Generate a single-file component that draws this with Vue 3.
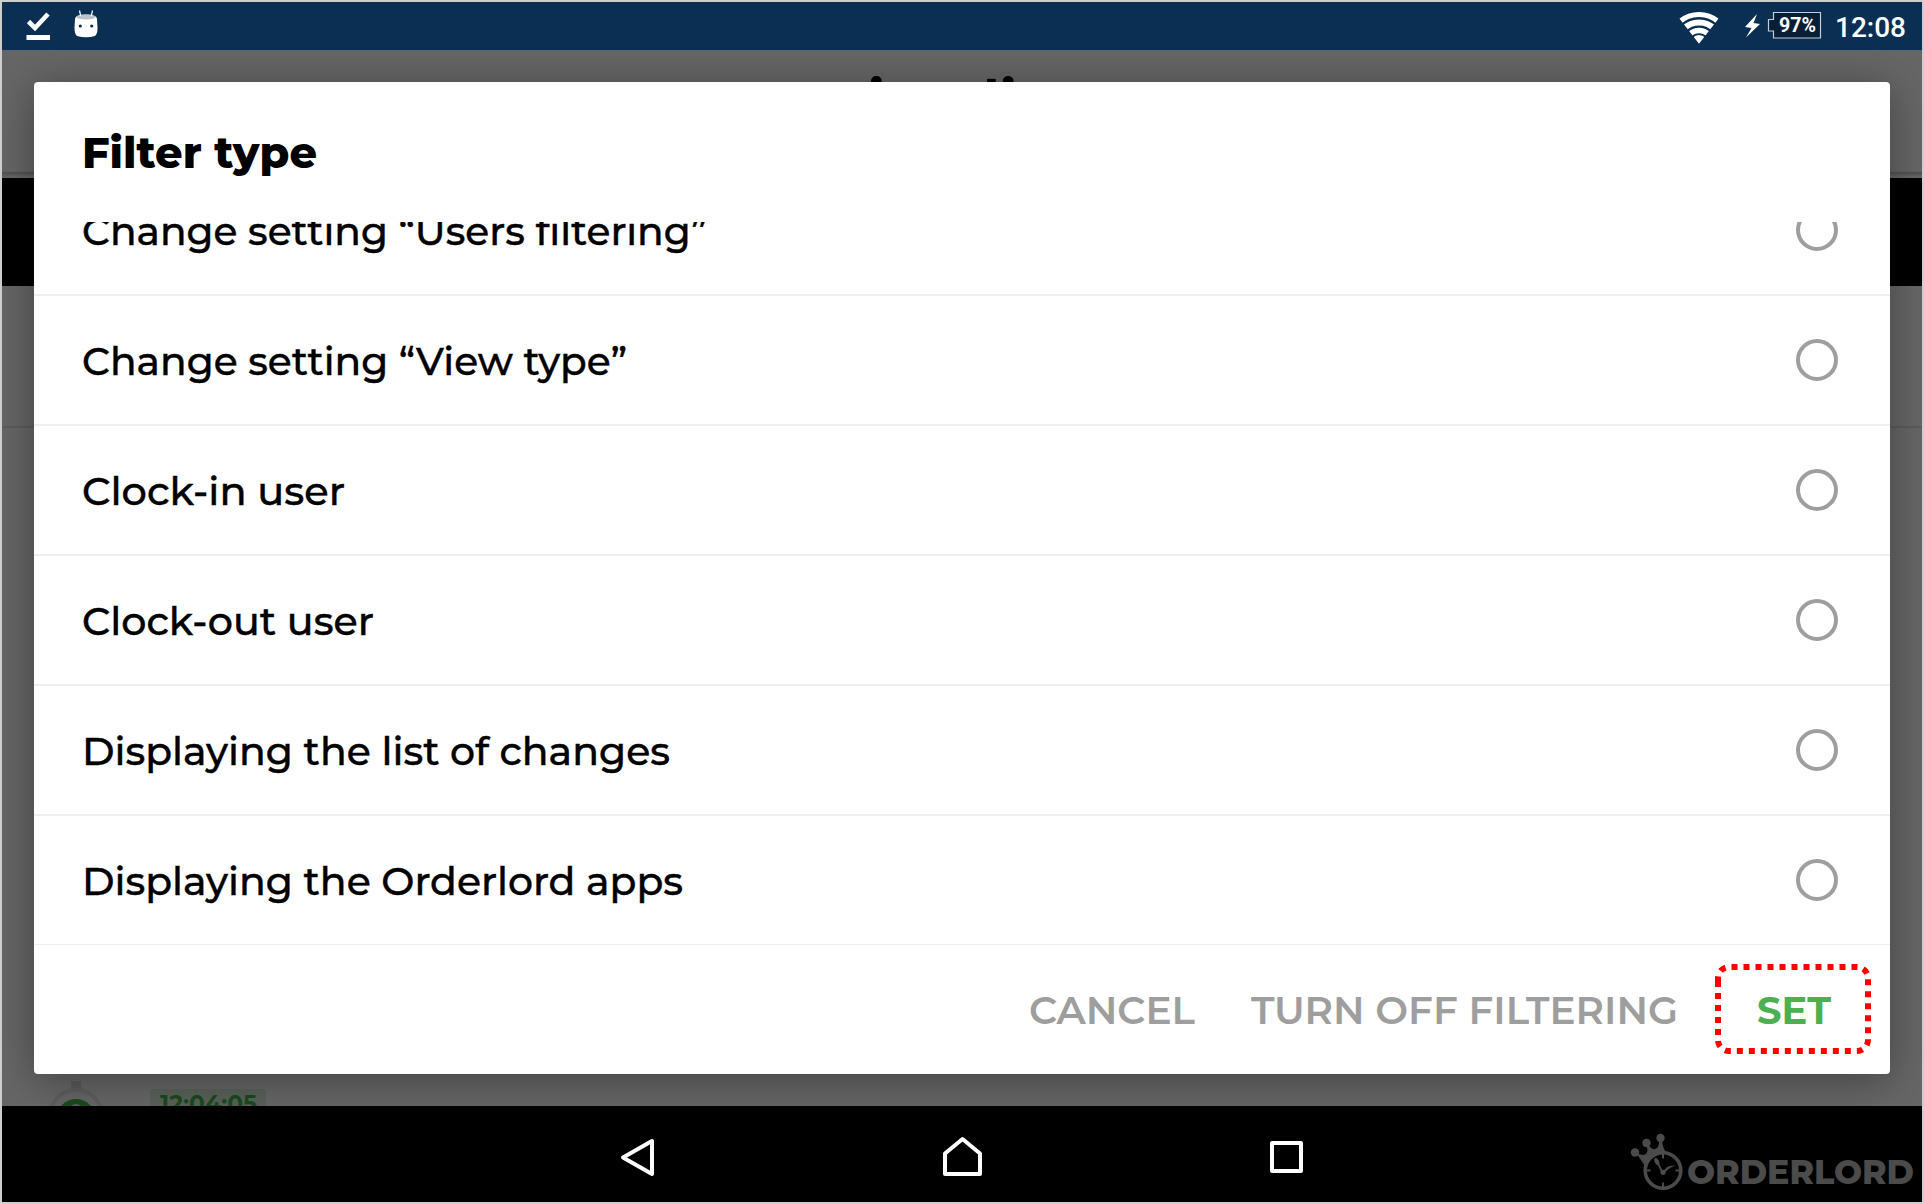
<script setup>
const rows = [
  { text: 'Change setting “Users filtering”', width: 625 },
  { text: 'Change setting “View type”', width: 545 },
  { text: 'Clock-in user', width: 263 },
  { text: 'Clock-out user', width: 292 },
  { text: 'Displaying the list of changes', width: 588 },
  { text: 'Displaying the Orderlord apps', width: 601 },
]
</script>

<template>
  <div class="device">
    <header class="status">
      <svg class="status-left" width="100" height="48" viewBox="2 2 100 48">
        <path d="M28.500 21.500 L35 28 L48 14" fill="none" stroke="#fff" stroke-width="4.600" />
        <rect x="26.500" y="35" width="23.500" height="5" fill="#fff" />
        <path d="M75 19 Q75 14.500 86 14.500 Q97 14.500 97 19 L97.500 28 Q97.500 34 95 36 Q86 38.500 77 36 Q74.500 34 74.500 28 Z" fill="#fff" />
        <ellipse cx="86" cy="17" rx="9.500" ry="2.600" fill="#b9c4cf" />
        <path d="M79.500 10.500 L80.700 16 M92.500 10.500 L91.300 16" stroke="#fff" stroke-width="1.200" />
        <circle cx="80.300" cy="26" r="1.600" fill="#0a2f53" />
        <circle cx="91.700" cy="26" r="1.600" fill="#0a2f53" />
      </svg>
      <svg class="status-right" width="252" height="48" viewBox="1670 2 252 48">
        <clipPath id="fan"><path d="M1699 43.800 L1679 18 L1679 10 L1719 10 L1719 18 Z" /></clipPath>
        <g clip-path="url(#fan)" fill="none" stroke="#fff">
          <circle cx="1699" cy="44" r="29.500" stroke-width="5" />
          <circle cx="1699" cy="44" r="21.500" stroke-width="6" />
          <circle cx="1699" cy="44" r="13.500" stroke-width="5.600" />
          <circle cx="1699" cy="44" r="4.500" stroke-width="9" />
        </g>
        <path d="M1757 14 L1745 27 L1751.500 28 L1746 37.500 L1760 24 L1753.500 23 Z" fill="#fff" />
        <path d="M1773.500 12.500 H1820.500 V38 H1773.500 V31 H1768.500 V19.500 H1773.500 Z" fill="#061e36" stroke="#c3ccd4" stroke-width="1.200" />
        <text x="1779" y="32.300" class="roboto" font-size="21" font-weight="700" textLength="37" lengthAdjust="spacingAndGlyphs">97%</text>
        <text x="1835" y="36.800" class="roboto" font-size="28" font-weight="500" textLength="71" lengthAdjust="spacingAndGlyphs">12:08</text>
      </svg>
    </header>

    <main class="page">
      <div class="page-header">
        <svg width="400" height="100" viewBox="762 50 400 100">
          <text class="heading" y="121"><tspan x="868">ion </tspan><tspan x="983">list</tspan></text>
        </svg>
      </div>
      <div class="page-tabs"></div>
      <div class="page-summary"></div>
      <div class="page-entry">
        <svg width="60" height="28" viewBox="48 1078 60 28">
          <rect x="71" y="1081" width="10" height="9" fill="#595959" />
          <circle cx="76" cy="1116" r="26" fill="none" stroke="#5e5e5e" stroke-width="4" />
          <circle cx="76" cy="1118.500" r="19.500" fill="#1b4a1e" />
          <circle cx="76" cy="1110" r="6" fill="#5d665e" />
        </svg>
        <div class="chip">
          <svg width="98" height="22">
            <text x="0" y="22.500" class="stamp" textLength="97" lengthAdjust="spacingAndGlyphs">12:04:05</text>
          </svg>
        </div>
      </div>

      <section class="dialog">
        <h1>
          <svg width="240" height="60">
            <text x="0" y="45.500" class="title" textLength="235" lengthAdjust="spacingAndGlyphs">Filter type</text>
          </svg>
        </h1>
        <div class="list">
          <div v-for="row in rows" :key="row.text" class="row">
            <svg :width="row.width + 10" height="60">
              <text x="0" y="44.500" class="label" :textLength="row.width" lengthAdjust="spacingAndGlyphs">{{ row.text }}</text>
            </svg>
            <span class="radio"></span>
          </div>
        </div>
        <footer class="actions">
          <svg width="167" height="60">
            <text x="0" y="45" class="action" textLength="166" lengthAdjust="spacingAndGlyphs">CANCEL</text>
          </svg>
          <svg width="427" height="60">
            <text x="0" y="45" class="action" textLength="427" lengthAdjust="spacingAndGlyphs">TURN OFF FILTERING</text>
          </svg>
          <svg class="set" width="156" height="90">
            <path d="M3 17 V76 A11 11 0 0 0 14 87 H142 A11 11 0 0 0 153 76 V14 A11 11 0 0 0 142 3 H14 A11 11 0 0 0 3 14 V17" fill="none" stroke="#f00" stroke-width="6" stroke-dasharray="6 6" />
            <text x="42" y="60" class="action confirm" textLength="74" lengthAdjust="spacingAndGlyphs">SET</text>
          </svg>
        </footer>
      </section>
    </main>

    <nav class="navbar">
      <svg class="nav-icons" width="700" height="96" viewBox="600 1106 700 96" fill="none" stroke="#fff" stroke-width="4" stroke-linejoin="round">
        <path d="M652 1141 V1174 L623 1157.500 Z" />
        <path d="M945 1153.500 L962.500 1139 L980 1153.500 V1174 H945 Z" />
        <rect x="1272" y="1143" width="29" height="28" />
      </svg>
      <svg class="brand" width="300" height="96" viewBox="1622 1106 300 96">
        <g fill="#4b4b4b">
          <circle cx="1635" cy="1152.500" r="4.200" />
          <circle cx="1646.500" cy="1143" r="4.200" />
          <circle cx="1660.500" cy="1138" r="4.200" />
          <path d="M1635.500 1152 Q1641 1156.500 1646 1154 Q1649 1151 1646 1144 L1648 1144 Q1651 1150 1655 1149 Q1660 1148 1659 1139 L1662 1139 Q1662 1147 1667 1154 L1645 1166 Z" />
          <circle cx="1663" cy="1170.500" r="17.800" fill="#000" stroke="#4b4b4b" stroke-width="3.600" />
          <path d="M1663 1154 V1158.500 M1663 1182.500 V1187 M1646 1170.500 H1650.500 M1675.500 1170.500 H1680" stroke="#4b4b4b" stroke-width="2" />
          <path d="M1662.500 1172.500 L1657.500 1162.500" stroke="#4b4b4b" stroke-width="1.800" />
          <ellipse cx="1656.800" cy="1161.500" rx="2.200" ry="3.800" transform="rotate(-27 1656.800 1161.500)" />
          <path d="M1663 1172.500 Q1666 1164.500 1675.500 1165.500 Q1670 1167 1664 1173 Z" />
          <circle cx="1663" cy="1172.300" r="2.600" />
          <text x="1687" y="1183.700" class="logo" textLength="227" lengthAdjust="spacingAndGlyphs">ORDERLORD</text>
        </g>
      </svg>
    </nav>
  </div>
</template>

<style>
body { margin: 0; }
</style>

<style scoped>
.device {
  width: 1924px;
  height: 1204px;
  box-sizing: border-box;
  border: 2px solid #cecece;
  display: flex;
  flex-direction: column;
  overflow: hidden;
  background: #000;
  font-family: "Montserrat", "Inter", sans-serif;
}
svg { display: block; flex: none; }
.status {
  height: 48px;
  flex: none;
  display: flex;
  justify-content: space-between;
  background: #0a2f53;
}
.roboto { font-family: "Roboto", sans-serif; fill: #fff; }
.page {
  height: 1056px;
  flex: none;
  position: relative;
  overflow: hidden;
  display: flex;
  flex-direction: column;
  background: #666;
}
.page-header {
  height: 128px;
  flex: none;
  box-sizing: border-box;
  padding-left: 760px;
  background: linear-gradient(#4f4f4f, #6a6a6a) bottom / 100% 6px no-repeat;
}
.page-tabs {
  height: 108px;
  flex: none;
  background: #000;
}
.page-summary {
  height: 140px;
  flex: none;
  border-bottom: 2px solid #5c5c5c;
}
.page-entry {
  margin-top: auto;
  height: 28px;
  display: flex;
  align-items: flex-end;
  padding-left: 46px;
}
.chip {
  width: 116px;
  height: 17px;
  margin-left: 42px;
  box-sizing: border-box;
  padding-left: 10px;
  border-radius: 4px 4px 0 0;
  background: #59625a;
  overflow: hidden;
}
.heading { font-size: 56px; font-weight: 700; fill: #000; }
.stamp { font-size: 23px; font-weight: 700; fill: #1b4a1e; }
.dialog {
  position: absolute;
  left: 32px;
  top: 32px;
  width: 1856px;
  height: 992px;
  display: flex;
  flex-direction: column;
  border-radius: 4px;
  background: #fff;
  box-shadow: 0 6px 44px rgba(0, 0, 0, 0.36);
}
h1 {
  margin: 0;
  height: 140px;
  flex: none;
  box-sizing: border-box;
  padding: 40px 0 0 48px;
}
.title { font-size: 44px; font-weight: 800; }
.list {
  height: 723px;
  flex: none;
  overflow: hidden;
}
.row {
  height: 130px;
  box-sizing: border-box;
  padding: 0 52px 0 48px;
  border-bottom: 2px solid #eee;
  display: flex;
  align-items: center;
  justify-content: space-between;
}
.row:first-child { margin-top: -56px; }
.label { font-size: 39.500px; font-weight: 500; stroke: #000; stroke-width: 0.400px; }
.radio {
  width: 42px;
  height: 42px;
  box-sizing: border-box;
  border: 4px solid #9e9e9e;
  border-radius: 50%;
}
.actions {
  height: 129px;
  box-sizing: border-box;
  flex: none;
  display: flex;
  align-items: center;
  justify-content: flex-end;
  gap: 55px;
  padding: 0 19px 1px 0;
}
.actions .set { margin-left: -18px; }
.action { font-size: 39px; font-weight: 600; fill: #9e9e9e; }
.confirm { font-weight: 700; fill: #4caf50; }
.navbar {
  height: 96px;
  flex: none;
  display: flex;
  justify-content: space-between;
  padding-left: 598px;
  background: #000;
}
.nav-icons { overflow: visible; }
.logo { font-size: 34px; font-weight: 800; }
</style>
